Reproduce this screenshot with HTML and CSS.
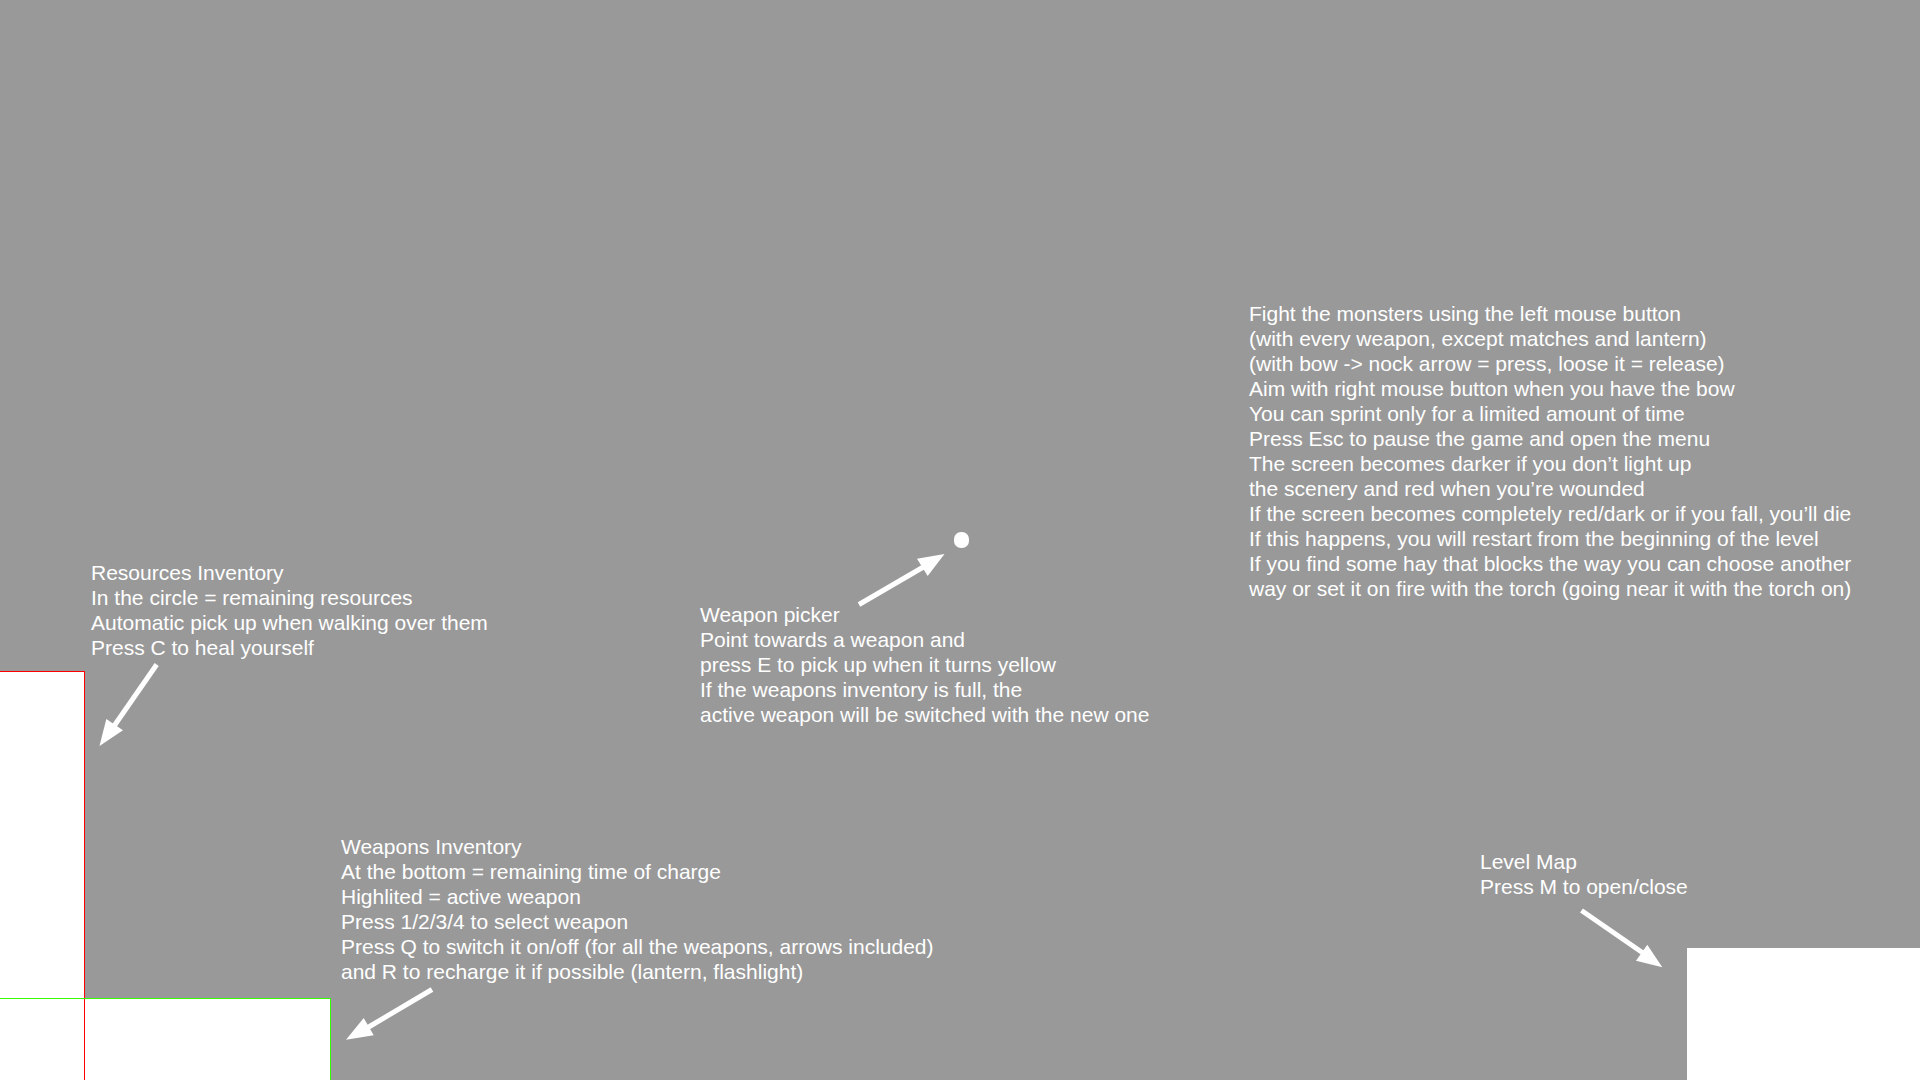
FILE: index.html
```html
<!DOCTYPE html>
<html lang="en">
<head>
<meta charset="utf-8">
<title>Game controls</title>
<link rel="stylesheet" href="styles.css">
</head>
<body>
<main class="hud">
  <div class="panel resources-panel"></div>
  <div class="panel weapons-panel"></div>
  <div class="panel map-panel"></div>

  <section class="note resources-note">
    <p>Resources Inventory<br>
    In the circle = remaining resources<br>
    Automatic pick up when walking over them<br>
    Press C to heal yourself</p>
    <svg class="arrow" width="64" height="88" viewBox="0 0 64 88" aria-hidden="true">
      <path class="shaft" d="M58.7 4.5 L14 69"/>
      <path class="head" d="M1.5 86 L8.3 59 L25 70.3 Z"/>
    </svg>
  </section>

  <section class="note picker-note">
    <svg class="arrow" width="116" height="80" viewBox="0 0 116 80" aria-hidden="true">
      <path class="shaft" d="M3 74.5 L70 35.5"/>
      <path class="head" d="M88.5 24 L61 28.7 L71.7 46 Z"/>
      <rect class="head" x="98" y="2" width="15" height="16" rx="7" ry="7"/>
    </svg>
    <p>Weapon picker<br>
    Point towards a weapon and<br>
    press E to pick up when it turns yellow<br>
    If the weapons inventory is full, the<br>
    active weapon will be switched with the new one</p>
  </section>

  <section class="note tips">
    <p>Fight the monsters using the left mouse button<br>
    (with every weapon, except matches and lantern)<br>
    (with bow -&gt; nock arrow = press, loose it = release)<br>
    Aim with right mouse button when you have the bow<br>
    You can sprint only for a limited amount of time<br>
    Press Esc to pause the game and open the menu<br>
    The screen becomes darker if you don’t light up<br>
    the scenery and red when you’re wounded<br>
    If the screen becomes completely red/dark or if you fall, you’ll die<br>
    If this happens, you will restart from the beginning of the level<br>
    If you find some hay that blocks the way you can choose another<br>
    way or set it on fire with the torch (going near it with the torch on)</p>
  </section>

  <section class="note weapons-note">
    <p>Weapons Inventory<br>
    At the bottom = remaining time of charge<br>
    Highlited = active weapon<br>
    Press 1/2/3/4 to select weapon<br>
    Press Q to switch it on/off (for all the weapons, arrows included)<br>
    and R to recharge it if possible (lantern, flashlight)</p>
    <svg class="arrow" width="92" height="60" viewBox="0 0 92 60" aria-hidden="true">
      <path class="shaft" d="M87 5.5 L22 44"/>
      <path class="head" d="M1 55.7 L18.7 34 L28.7 51.3 Z"/>
    </svg>
  </section>

  <section class="note map-note">
    <p>Level Map<br>
    Press M to open/close</p>
    <svg class="arrow" width="88" height="72" viewBox="0 0 88 72" aria-hidden="true">
      <path class="shaft" d="M3.5 11.5 L65 54"/>
      <path class="head" d="M84.3 68.3 L69.3 45.7 L58 61.7 Z"/>
    </svg>
  </section>
</main>
</body>
</html>
```
FILE: styles.css
```css
body {
  margin: 0;
  background: #999;
  color: #fff;
  font: 21px/25px "Liberation Sans", Arial, sans-serif;
}

.hud {
  display: grid;
  grid-template-columns: 85px 246px 369px minmax(0, 1fr) 438px 233px;
  grid-template-rows: minmax(0, 1fr) 163px 164px 82px;
  min-height: 100vh;
}

/* Inventory and map panels */
.panel {
  box-sizing: border-box;
  background: #fff;
}

.resources-panel {
  grid-area: 2 / 1 / 5 / 2;
  border-top: 1px solid #f00;
  border-right: 1px solid #f00;
}

/* The fill starts after the resources column, so its red edge stays visible */
.weapons-panel {
  grid-area: 4 / 1 / 5 / 3;
  border-top: 1px solid #3f0;
  border-right: 1px solid #3f0;
  background: linear-gradient(#fff, #fff) 85px 0 no-repeat;
}

.map-panel {
  grid-area: 3 / 6 / 5 / 7;
  align-self: end;
  height: 132px;
}

/* Explanations */
.note {
  white-space: nowrap;
}

.note p {
  margin: 0;
}

.arrow {
  display: block;
}

.shaft {
  fill: none;
  stroke: #fff;
  stroke-width: 5;
}

.head {
  fill: #fff;
}

.resources-note {
  grid-area: 1 / 2 / 3 / 4;
  align-self: end;
  padding: 0 0 86px 6px;
}

.resources-note .arrow {
  margin-left: 7px;
}

.picker-note {
  grid-area: 1 / 4 / 3 / 5;
  align-self: end;
  padding-bottom: 107px;
}

.picker-note .arrow {
  margin: 0 0 -8px 156px;
}

.tips {
  grid-area: 1 / 5 / 2 / 7;
  align-self: end;
  padding-bottom: 70px;
}

.weapons-note {
  grid-area: 3 / 3 / 5 / 5;
  padding-left: 10px;
}

.weapons-note .arrow {
  margin-left: 4px;
}

.map-note {
  grid-area: 3 / 5 / 5 / 6;
  padding: 15px 0 0 231px;
}

.map-note .arrow {
  margin-left: 98px;
}
```
